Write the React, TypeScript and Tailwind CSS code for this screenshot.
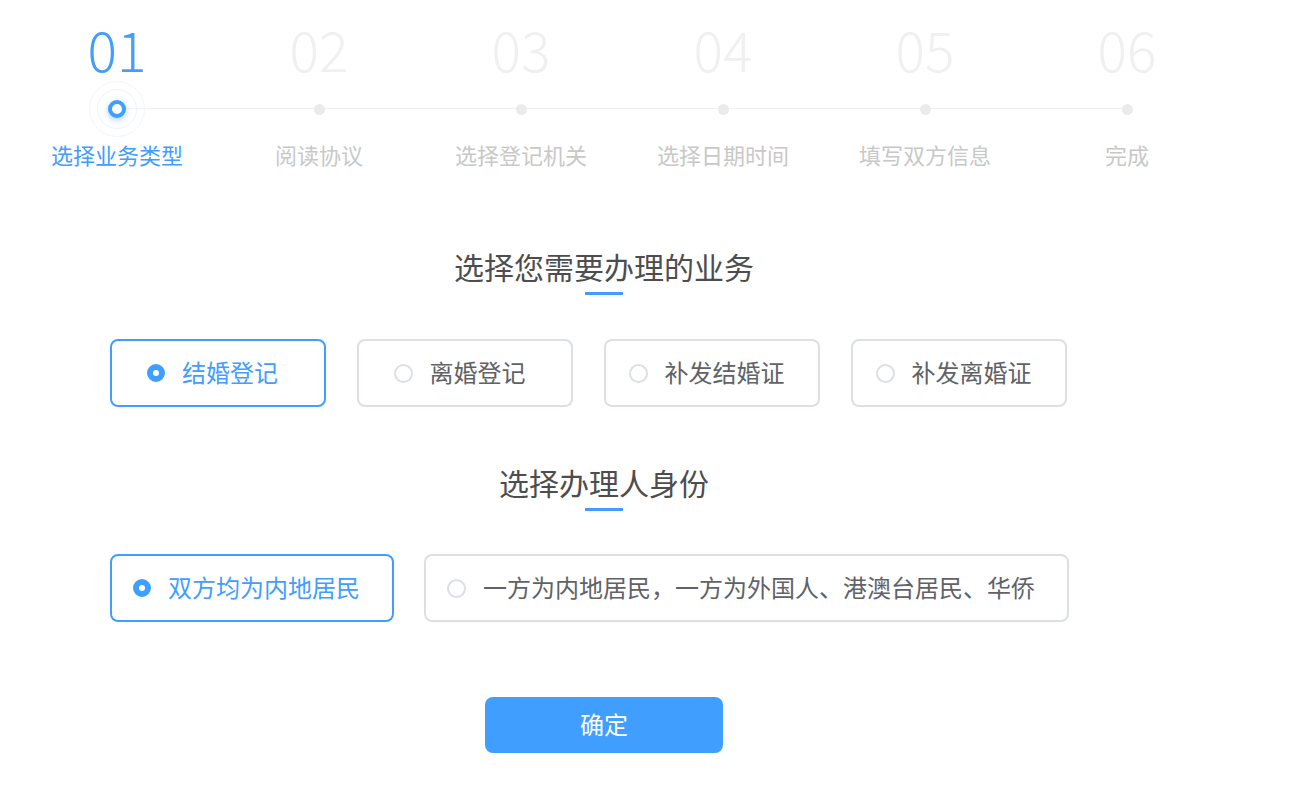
import { useState } from "react";

const steps = [
  { no: "01", label: "选择业务类型" },
  { no: "02", label: "阅读协议" },
  { no: "03", label: "选择登记机关" },
  { no: "04", label: "选择日期时间" },
  { no: "05", label: "填写双方信息" },
  { no: "06", label: "完成" },
];

const businessTypes = ["结婚登记", "离婚登记", "补发结婚证", "补发离婚证"];
const identities = ["双方均为内地居民", "一方为内地居民，一方为外国人、港澳台居民、华侨"];

function Radio({ checked }: { checked: boolean }) {
  return checked ? (
    <span className="h-[18px] w-[18px] shrink-0 rounded-full border-[6px] border-[#409eff] bg-white" />
  ) : (
    <span className="h-[19px] w-[19px] shrink-0 rounded-full border-2 border-[#dcdfe6] bg-white" />
  );
}

function Title({ children }: { children: string }) {
  return (
    <div className="flex flex-col items-center">
      <h2 className="text-[30px] leading-[40px] font-normal text-[#4d4d4d]">{children}</h2>
      <div className="mt-[6px] h-[3px] w-[38px] bg-[#409eff]" />
    </div>
  );
}

export default function App() {
  const [biz, setBiz] = useState(0);
  const [who, setWho] = useState(0);

  return (
    <div className="min-h-[793px] w-full bg-white font-['Noto_Sans_CJK_SC','Noto_Sans',sans-serif]">
      {/* steps */}
      <div className="relative ml-[16px] flex w-[1213px]">
        <div className="absolute left-[101px] right-[101px] top-[108px] h-px bg-[#f0f0f0]" />
        {steps.map((s, i) => {
          const active = i === 0;
          return (
            <div key={s.no} className="relative flex w-[202px] flex-col items-center">
              <div
                className={
                  "mt-[21px] h-[54px] text-[55px] leading-[54px] font-light " +
                  (active ? "text-[#409eff]" : "text-[#f0f0f0]")
                }
              >
                {s.no}
              </div>
              <div className="mt-[24px] flex h-[20px] items-center justify-center">
                {active ? (
                  <span className="relative flex h-[18px] w-[18px] items-center justify-center">
                    <span className="absolute h-[56px] w-[56px] rounded-full border border-[#f3f6fa]" />
                    <span className="absolute h-[40px] w-[40px] rounded-full border border-[#eef3f9]" />
                    <span className="h-[18px] w-[18px] rounded-full border-[4px] border-[#409eff] bg-white shadow-[0_2px_6px_rgba(64,158,255,0.45)]" />
                  </span>
                ) : (
                  <span className="h-[11px] w-[11px] rounded-full bg-[#ebebeb]" />
                )}
              </div>
              <div
                className={
                  "mt-[20px] text-[22px] leading-[30px] " + (active ? "text-[#409eff]" : "text-[#c8c8c8]")
                }
              >
                {s.label}
              </div>
            </div>
          );
        })}
      </div>

      {/* content */}
      <div className="w-[1208px]">
        <div className="mt-[77px]">
          <Title>选择您需要办理的业务</Title>
        </div>

        <div className="ml-[110px] mt-[44px] flex gap-[31px]">
          {businessTypes.map((t, i) => {
            const on = biz === i;
            return (
              <button
                key={t}
                type="button"
                onClick={() => setBiz(i)}
                className={
                  "flex h-[68px] w-[216px] items-center justify-center gap-[17px] rounded-[8px] border-2 bg-white pr-[11px] text-[24px] " +
                  (on ? "border-[#409eff] text-[#409eff]" : "border-[#dcdfe6] text-[#606266]")
                }
              >
                <Radio checked={on} />
                <span className="pb-[3px] leading-none">{t}</span>
              </button>
            );
          })}
        </div>

        <div className="mt-[55px]">
          <Title>选择办理人身份</Title>
        </div>

        <div className="ml-[110px] mt-[43px] flex gap-[30px]">
          {identities.map((t, i) => {
            const on = who === i;
            return (
              <button
                key={t}
                type="button"
                onClick={() => setWho(i)}
                className={
                  "flex h-[68px] items-center gap-[17px] rounded-[8px] border-2 bg-white pl-[21px] pr-[32px] text-[24px] " +
                  (on ? "border-[#409eff] text-[#409eff]" : "border-[#dcdfe6] text-[#606266]")
                }
              >
                <Radio checked={on} />
                <span className="pb-[3px] leading-none whitespace-nowrap">{t}</span>
              </button>
            );
          })}
        </div>

        <button
          type="button"
          className="mx-auto mt-[75px] flex h-[56px] w-[238px] items-center justify-center rounded-[8px] bg-[#409eff] pb-[2px] text-[24px] text-white"
        >
          确定
        </button>
      </div>
    </div>
  );
}
